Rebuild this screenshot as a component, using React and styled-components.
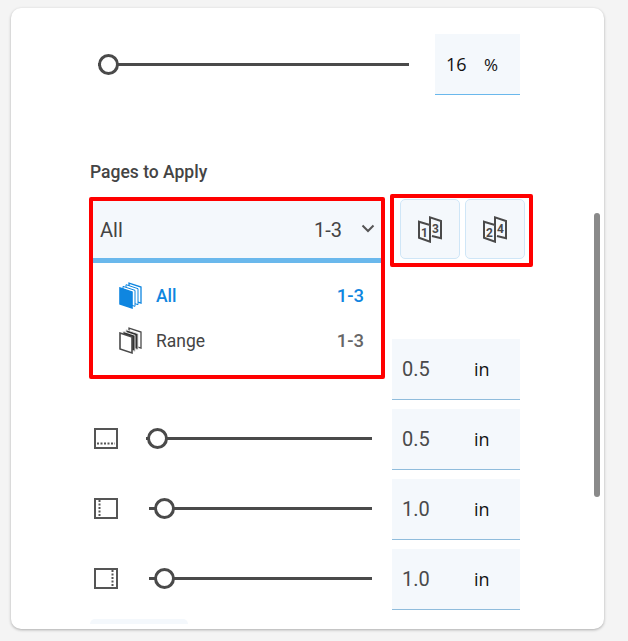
import React from 'react';
import styled, { createGlobalStyle } from 'styled-components';

const GlobalStyle = createGlobalStyle`
  html, body {
    margin: 0;
    height: 641px;
    overflow: hidden;
    background: #f4f4f4;
    font-family: Roboto, "Liberation Sans", sans-serif;
  }
`;

const stackTones = {
  blue: { front: '#0f86e0', line: '#0f86e0', back: '#fff', mid: '#fff', midLine: '#0f86e0' },
  dark: { front: '#fff', line: '#4a4a4a', back: '#fff', mid: '#333', midLine: '#ddd' },
};

// stack of sheets, front one drawn last
const StackIcon = ({ tone }) => {
  const c = stackTones[tone];
  const sheet = (d) => `M${2 + d} ${6 - d * 0.55}L${14 + d} ${10 - d * 0.55}V${26 - d * 0.55}L${2 + d} ${22 - d * 0.55}Z`;
  return (
    <svg width="26" height="28" viewBox="0 0 26 28">
      <path d={sheet(9)} fill={c.back} stroke={c.line} strokeWidth="1.3" />
      <path d={sheet(6)} fill={c.mid} stroke={c.midLine} strokeWidth="1" />
      <path d={sheet(3)} fill={c.mid} stroke={c.midLine} strokeWidth="1" />
      <path d={sheet(0)} fill={c.front} stroke={c.line} strokeWidth="1.6" />
    </svg>
  );
};

const SpreadIcon = ({ left, right }) => (
  <svg width="26" height="28" viewBox="0 0 26 28">
    <path d="M2 6.7L13 10V26.7L2 22.7Z" fill="none" stroke="#4a4a4a" strokeWidth="2" />
    <path d="M13 10V2.3L24 6V23.3L15 21" fill="none" stroke="#4a4a4a" strokeWidth="2" />
    <text x="7.5" y="22" fontSize="12" fontWeight="700" fill="#4a4a4a" textAnchor="middle" fontFamily="Roboto">{left}</text>
    <text x="18.5" y="18" fontSize="12" fontWeight="700" fill="#4a4a4a" textAnchor="middle" fontFamily="Roboto">{right}</text>
  </svg>
);

const dashes = {
  top: 'M3 6H21',
  bottom: 'M3 15.5H21',
  left: 'M5.5 2V19',
  right: 'M18.5 2V19',
};

const MarginIcon = ({ side }) => (
  <svg width="24" height="21" viewBox="0 0 24 21">
    <rect x="1" y="1" width="22" height="19" fill="none" stroke="#555" strokeWidth="2" />
    <path d={dashes[side]} stroke="#555" strokeWidth="2" strokeDasharray="2 1.5" fill="none" />
  </svg>
);

const Chevron = () => (
  <svg width="14" height="9" viewBox="0 0 14 9">
    <path d="M1.5 1.5L7 7L12.5 1.5" fill="none" stroke="#555" strokeWidth="2" />
  </svg>
);

const Slider = ({ thumb = 0, inset = 0, width }) => (
  <SliderWrap $width={width}>
    <Track $inset={inset} />
    <Thumb $left={thumb} />
  </SliderWrap>
);

const Field = ({ value, unit, wide }) => (
  <FieldBox $wide={wide}>
    <FieldValue $wide={wide}>{value}</FieldValue>
    <FieldUnit $wide={wide}>{unit}</FieldUnit>
  </FieldBox>
);

const marginRows = [
  { side: 'top', value: '0.5', thumb: 1, inset: 0 },
  { side: 'bottom', value: '0.5', thumb: 1, inset: 0 },
  { side: 'left', value: '1.0', thumb: 8, inset: 3 },
  { side: 'right', value: '1.0', thumb: 8, inset: 3 },
];

export default function App() {
  return (
    <>
      <GlobalStyle />
      <Card>
        <ScrollArea>
          <ScaleRow>
            <Slider width={311} />
            <Field value="16" unit="%" wide={false} />
          </ScaleRow>

          <SectionLabel>Pages to Apply</SectionLabel>

          <PagesRow>
            <Dropdown>
              <SelectHead>
                <SelectName>All</SelectName>
                <SelectRange>1-3</SelectRange>
                <Chevron />
              </SelectHead>
              <Menu>
                <MenuItem $active>
                  <StackIcon tone="blue" />
                  <ItemName>All</ItemName>
                  <ItemRange>1-3</ItemRange>
                </MenuItem>
                <MenuItem>
                  <StackIcon tone="dark" />
                  <ItemName>Range</ItemName>
                  <ItemRange $muted>1-3</ItemRange>
                </MenuItem>
              </Menu>
            </Dropdown>
            <ButtonGroup>
              <PageButton><SpreadIcon left="1" right="3" /></PageButton>
              <PageButton><SpreadIcon left="2" right="4" /></PageButton>
            </ButtonGroup>
          </PagesRow>

          {marginRows.map((row) => (
            <MarginRow key={row.side}>
              <MarginIcon side={row.side} />
              <Slider width={226} thumb={row.thumb} inset={row.inset} />
              <Field value={row.value} unit="in" wide />
            </MarginRow>
          ))}

          <NextButton />
        </ScrollArea>
        <ScrollThumb />
      </Card>
    </>
  );
}

const Card = styled.div`
  position: relative;
  box-sizing: border-box;
  width: 593px;
  height: 621px;
  margin: 8px 0 0 11px;
  background: #fff;
  border-radius: 10px;
  box-shadow: 0 1px 3px rgba(0, 0, 0, 0.3);
`;

const ScrollArea = styled.div`
  height: 616px;
  padding-top: 26px;
  box-sizing: border-box;
  overflow: hidden;
  border-radius: 10px 10px 0 0;
`;

const ScrollThumb = styled.div`
  position: absolute;
  top: 205px;
  left: 583px;
  width: 6px;
  height: 284px;
  border-radius: 3px;
  background: #8a8a8a;
`;

const ScaleRow = styled.div`
  display: flex;
  align-items: flex-start;
  gap: 26px;
  padding-left: 87px;
  height: 61px;

  & > div:first-child {
    margin-top: 19.5px;
  }
`;

const SectionLabel = styled.div`
  margin: 68px 0 0 79px;
  font-size: 17.5px;
  line-height: 19px;
  font-weight: 500;
  color: #444;
`;

const PagesRow = styled.div`
  position: relative;
  height: 145px;
  margin-top: 12px;
  padding-left: 379px;
`;

const Dropdown = styled.div`
  position: absolute;
  z-index: 2;
  top: 3px;
  left: 78px;
  box-sizing: border-box;
  width: 296px;
  height: 182px;
  border: 4px solid #f00;
  border-radius: 2px;
  background: #fff;
`;

const SelectHead = styled.div`
  display: flex;
  align-items: center;
  box-sizing: border-box;
  height: 62px;
  padding: 0 6px 0 7px;
  background: #f4f8fc;
  border-bottom: 5px solid #6ab8ec;
  color: #444;
  font-size: 20px;

  & > svg {
    margin-top: -3px;
  }
`;

const SelectName = styled.span`
  flex: 1;
`;

const SelectRange = styled.span`
  margin-right: 19px;
`;

const Menu = styled.div`
  padding: 10px 17px 0 25px;
`;

const MenuItem = styled.div`
  display: flex;
  align-items: center;
  height: 45px;
  font-size: 17.5px;
  color: ${(props) => (props.$active ? '#0f86e0' : '#444')};
  font-weight: ${(props) => (props.$active ? 500 : 400)};
`;

const ItemName = styled.span`
  flex: 1;
  margin-left: 12px;
`;

const ItemRange = styled.span`
  font-size: 18.5px;
  font-weight: 500;
  color: ${(props) => (props.$muted ? '#666' : '#0f86e0')};
`;

const ButtonGroup = styled.div`
  display: flex;
  gap: 5px;
  box-sizing: border-box;
  width: 143px;
  height: 73px;
  padding: 1px 4px 0 6px;
  border: 4px solid #f00;
  border-radius: 2px;
`;

const PageButton = styled.div`
  display: flex;
  align-items: center;
  justify-content: center;
  box-sizing: border-box;
  width: 60px;
  height: 60px;
  background: #f4f8fc;
  border: 1px solid #cfe6f7;
  border-radius: 5px;
`;

const MarginRow = styled.div`
  display: flex;
  align-items: center;
  gap: 20px;
  height: 61px;
  margin-bottom: 9px;
  padding-left: 83px;

  & > svg {
    margin-right: 8px;
    margin-top: -3px;
  }
`;

const SliderWrap = styled.div`
  position: relative;
  width: ${(props) => props.$width}px;
  height: 21px;
  margin-top: -3px;
`;

const Track = styled.div`
  position: absolute;
  top: 9px;
  left: ${(props) => props.$inset}px;
  right: 0;
  height: 3px;
  background: #4a4a4a;
`;

const Thumb = styled.div`
  position: absolute;
  top: 0;
  left: ${(props) => props.$left}px;
  box-sizing: border-box;
  width: 21px;
  height: 21px;
  border: 3.5px solid #4a4a4a;
  border-radius: 50%;
  background: #fff;
`;

const FieldBox = styled.div`
  display: flex;
  align-items: center;
  box-sizing: border-box;
  width: ${(props) => (props.$wide ? 128 : 85)}px;
  height: 61px;
  padding-left: ${(props) => (props.$wide ? 10 : 11)}px;
  background: #f4f8fc;
  border-bottom: 1px solid ${(props) => (props.$wide ? '#8fbcdc' : '#6ab8ec')};
  font-family: "Open Sans", Roboto, sans-serif;
`;

const FieldValue = styled.span`
  width: ${(props) => (props.$wide ? 72 : 38)}px;
  font-family: ${(props) => (props.$wide ? 'Roboto' : '"Open Sans"')}, sans-serif;
  font-size: ${(props) => (props.$wide ? 20 : 18)}px;
  color: ${(props) => (props.$wide ? '#4a4a4a' : '#111')};
`;

const FieldUnit = styled.span`
  font-size: ${(props) => (props.$wide ? 18 : 17)}px;
  color: #111;
`;

const NextButton = styled.div`
  width: 98px;
  height: 40px;
  margin-left: 79px;
  background: #f4f8fc;
  border-radius: 5px;
`;
